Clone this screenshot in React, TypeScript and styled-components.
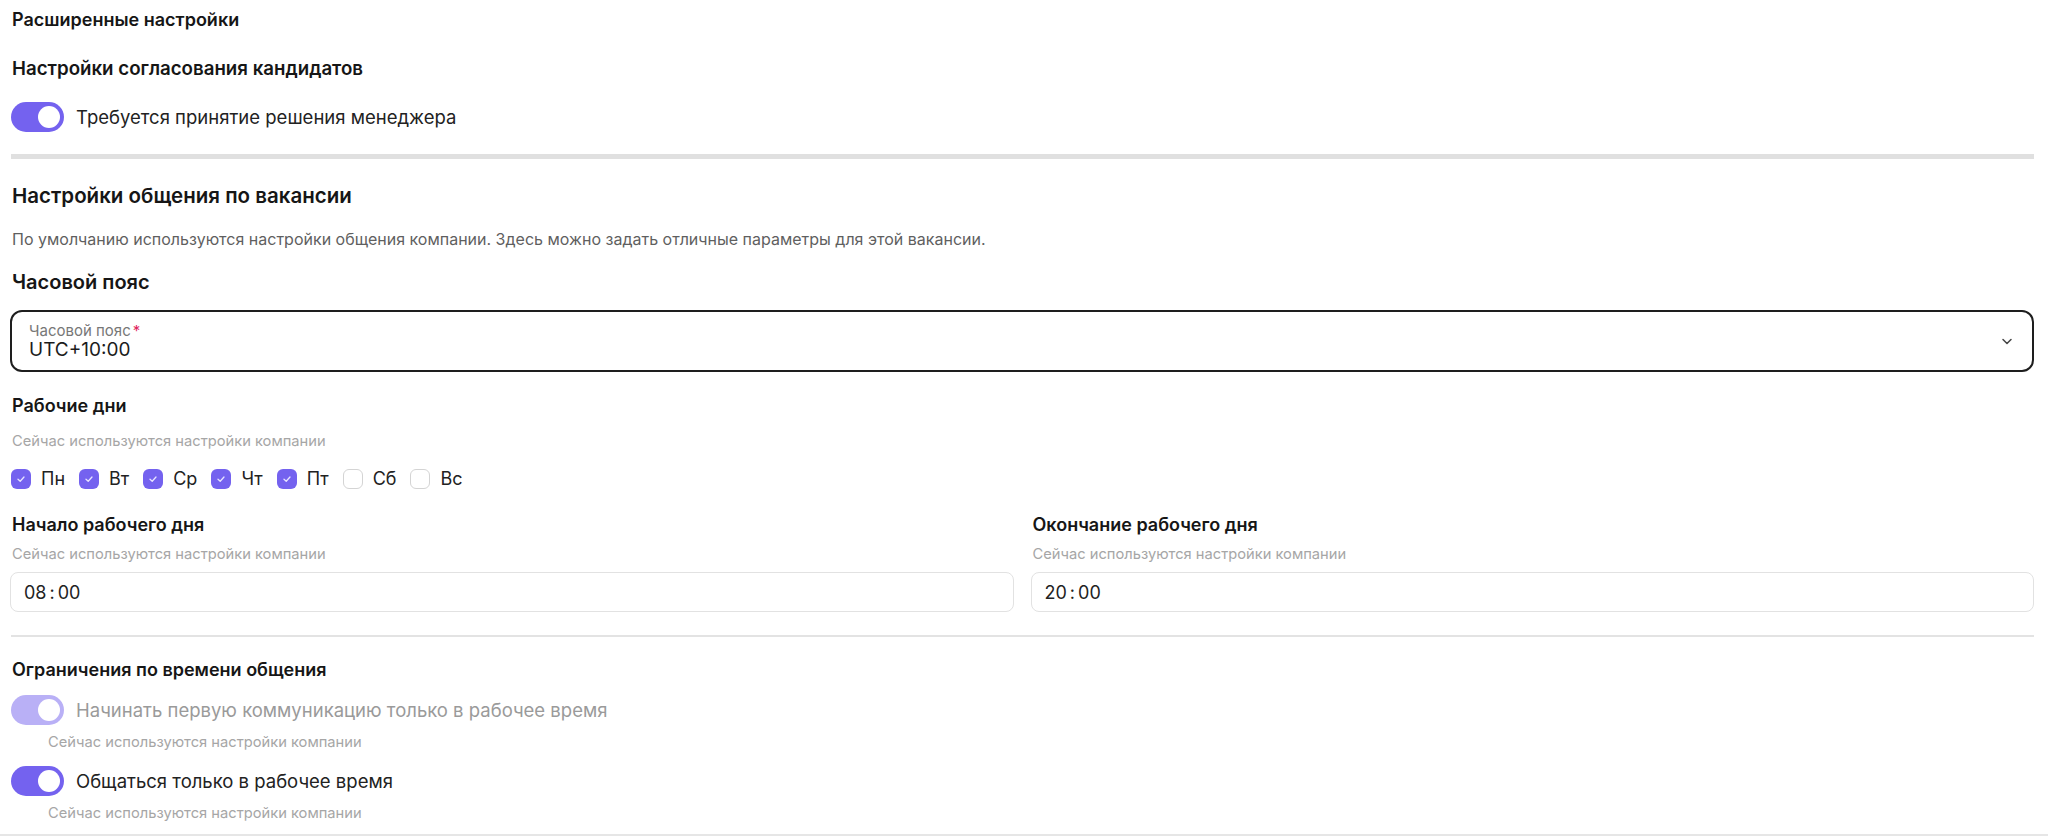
import styled, { createGlobalStyle } from "styled-components";

const GlobalStyle = createGlobalStyle`
  html, body {
    margin: 0;
    padding: 0;
    background: #fff;
    font-family: Inter, "Noto Sans", sans-serif;
    color: #1c1c1c;
  }
`;

const days = [
  { label: "Пн", on: true },
  { label: "Вт", on: true },
  { label: "Ср", on: true },
  { label: "Чт", on: true },
  { label: "Пт", on: true },
  { label: "Сб", on: false },
  { label: "Вс", on: false },
];

export default function App() {
  return (
    <>
      <GlobalStyle />
      <Page>
        <PageTitle>Расширенные настройки</PageTitle>
        <SectionTitle $mt={25} $size={18.7}>
          Настройки согласования кандидатов
        </SectionTitle>
        <ToggleRow $mt={21}>
          <Switch $on />
          <ToggleLabel>Требуется принятие решения менеджера</ToggleLabel>
        </ToggleRow>

        <ThickDivider />

        <SectionTitle $mt={25} $size={20.5}>
          Настройки общения по вакансии
        </SectionTitle>
        <Description>
          По умолчанию используются настройки общения компании. Здесь можно
          задать отличные параметры для этой вакансии.
        </Description>

        <BigTitle>Часовой пояс</BigTitle>
        <Select>
          <SelectText>
            <SelectLabel>
              Часовой пояс<Required>*</Required>
            </SelectLabel>
            <SelectValue>UTC+10:00</SelectValue>
          </SelectText>
          <svg width="14" height="14" viewBox="0 0 14 14" fill="none">
            <path
              d="M3 5.5 7 9.5 11 5.5"
              stroke="#444"
              strokeWidth="1.5"
              strokeLinecap="round"
              strokeLinejoin="round"
            />
          </svg>
        </Select>

        <FieldTitle $mt={23}>Рабочие дни</FieldTitle>
        <Hint $mt={15}>Сейчас используются настройки компании</Hint>
        <Days>
          {days.map((d) => (
            <Day key={d.label}>
              <Check $on={d.on}>
                {d.on && (
                  <svg width="10" height="10" viewBox="0 0 10 10" fill="none">
                    <path
                      d="M2 5.2 4.2 7.2 8 3"
                      stroke="#e8e4ff"
                      strokeWidth="1.3"
                      strokeLinecap="round"
                      strokeLinejoin="round"
                    />
                  </svg>
                )}
              </Check>
              <DayLabel>{d.label}</DayLabel>
            </Day>
          ))}
        </Days>

        <TimeGrid>
          <TimeField>
            <FieldTitle>Начало рабочего дня</FieldTitle>
            <Hint $mt={9}>Сейчас используются настройки компании</Hint>
            <TimeInput>
              08<Colon>:</Colon>00
            </TimeInput>
          </TimeField>
          <TimeField>
            <FieldTitle>Окончание рабочего дня</FieldTitle>
            <Hint $mt={9}>Сейчас используются настройки компании</Hint>
            <TimeInput>
              20<Colon>:</Colon>00
            </TimeInput>
          </TimeField>
        </TimeGrid>

        <ThinDivider />

        <FieldTitle $mt={22}>Ограничения по времени общения</FieldTitle>
        <ToggleRow $mt={14}>
          <Switch $on $disabled />
          <ToggleLabel $muted>
            Начинать первую коммуникацию только в рабочее время
          </ToggleLabel>
        </ToggleRow>
        <ToggleHint>Сейчас используются настройки компании</ToggleHint>
        <ToggleRow $mt={15}>
          <Switch $on />
          <ToggleLabel>Общаться только в рабочее время</ToggleLabel>
        </ToggleRow>
        <ToggleHint>Сейчас используются настройки компании</ToggleHint>
      </Page>
    </>
  );
}

const Page = styled.div`
  display: flex;
  flex-direction: column;
  align-items: stretch;
  padding: 8px 14px 12px 11px;
  border-bottom: 2px solid #e6e6e6;
`;

const PageTitle = styled.h1`
  margin: 0 0 0 1px;
  font-size: 18px;
  line-height: 24px;
  font-weight: 600;
  color: #161616;
`;

const SectionTitle = styled.h2<{ $mt: number; $size: number }>`
  margin: ${(p) => p.$mt}px 0 0 1px;
  font-size: ${(p) => p.$size}px;
  line-height: 24px;
  font-weight: 600;
  color: #161616;
`;

const BigTitle = styled.h3`
  margin: 19px 0 0 1px;
  font-size: 20px;
  line-height: 28px;
  font-weight: 600;
  color: #161616;
`;

const FieldTitle = styled.div<{ $mt?: number }>`
  margin: ${(p) => p.$mt ?? 0}px 0 0 1px;
  font-size: 18px;
  line-height: 22px;
  font-weight: 600;
  color: #161616;
`;

const Description = styled.p`
  margin: 21px 0 0 1px;
  font-size: 16px;
  line-height: 20px;
  color: #5f5f5f;
`;

const Hint = styled.div<{ $mt: number }>`
  margin: ${(p) => p.$mt}px 0 0 1px;
  font-size: 14.7px;
  line-height: 18px;
  color: #a6a6a6;
`;

const ToggleRow = styled.div<{ $mt: number }>`
  display: flex;
  align-items: center;
  gap: 12px;
  margin-top: ${(p) => p.$mt}px;
`;

const Switch = styled.span<{ $on?: boolean; $disabled?: boolean }>`
  position: relative;
  flex: none;
  width: 53px;
  height: 30px;
  border-radius: 15px;
  background: ${(p) =>
    p.$disabled ? "#b9b0f6" : p.$on ? "#7462ef" : "#d5d5d5"};

  &::after {
    content: "";
    position: absolute;
    top: 4px;
    left: ${(p) => (p.$on ? "27px" : "4px")};
    width: 22px;
    height: 22px;
    border-radius: 50%;
    background: #fff;
  }
`;

const ToggleLabel = styled.span<{ $muted?: boolean }>`
  font-size: 18.5px;
  line-height: 22px;
  color: ${(p) => (p.$muted ? "#9a9a9a" : "#222")};
`;

const ToggleHint = styled.div`
  margin: 8px 0 0 37px;
  font-size: 14.7px;
  line-height: 18px;
  color: #a6a6a6;
`;

const ThickDivider = styled.div`
  margin-top: 22px;
  height: 5px;
  background: #e0e0e0;
`;

const ThinDivider = styled.div`
  margin-top: 23px;
  height: 2px;
  background: #e3e3e3;
`;

const Select = styled.div`
  display: flex;
  align-items: center;
  justify-content: space-between;
  margin: 14px 0 0 -1px;
  height: 62px;
  box-sizing: border-box;
  padding: 0 18px 0 17px;
  border: 2px solid #1e1e1e;
  border-radius: 12px;
`;

const SelectText = styled.div`
  display: flex;
  flex-direction: column;
`;

const SelectLabel = styled.span`
  font-size: 15px;
  line-height: 17px;
  color: #777;
`;

const Required = styled.span`
  color: #e0245e;
  margin-left: 2px;
`;

const SelectValue = styled.span`
  font-size: 19px;
  line-height: 22px;
  color: #1c1c1c;
`;

const Days = styled.div`
  display: flex;
  align-items: center;
  gap: 14px;
  margin-top: 18px;
`;

const Day = styled.label`
  display: flex;
  align-items: center;
  gap: 10px;
`;

const Check = styled.span<{ $on: boolean }>`
  display: flex;
  align-items: center;
  justify-content: center;
  width: 20px;
  height: 20px;
  box-sizing: border-box;
  border-radius: 6px;
  background: ${(p) => (p.$on ? "#7462ef" : "#fff")};
  border: ${(p) => (p.$on ? "none" : "1.5px solid #d4d4d4")};
`;

const DayLabel = styled.span`
  font-size: 18px;
  line-height: 22px;
  color: #222;
`;

const TimeGrid = styled.div`
  display: grid;
  grid-template-columns: 1fr 1fr;
  gap: 17px;
  margin: 24px 0 0 -1px;
`;

const TimeField = styled.div`
  display: flex;
  flex-direction: column;
  padding-left: 1px;
`;

const TimeInput = styled.div`
  display: flex;
  align-items: center;
  margin: 9px 0 0 -1px;
  height: 40px;
  box-sizing: border-box;
  padding: 0 13px;
  border: 1.5px solid #e2e2e2;
  border-radius: 8px;
  font-size: 18px;
  color: #222;
`;

const Colon = styled.span`
  margin: 0 3px;
`;
